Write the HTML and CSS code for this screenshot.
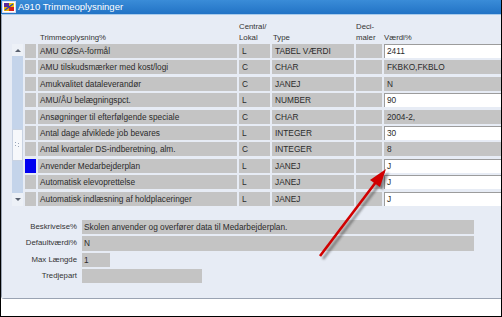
FILE: index.html
```html
<!DOCTYPE html>
<html>
<head>
<meta charset="utf-8">
<link rel="stylesheet" href="styles.css">
</head>
<body>
<div class="frame">
  <div class="win">
    <div class="titlebar">
      <svg class="ticon" width="14" height="12" viewBox="0 0 14 12">
        <rect x="0.5" y="0.5" width="13" height="11" fill="#fff" stroke="#d8d8e8"/>
        <rect x="2" y="2" width="5" height="4" fill="#5a2a9a"/>
        <rect x="7" y="2" width="5" height="4" fill="#f2c500"/>
        <rect x="2" y="6" width="5" height="4" fill="#e8b000"/>
        <rect x="7" y="6" width="5" height="4" fill="#d42020"/>
        <path d="M3 9 L11 3" stroke="#2040c0" stroke-width="1.2"/>
      </svg>
      <span class="ttext">A910 Trimmeoplysninger</span>
    </div>
    <div class="client">
      <div class="thead">
        <div></div>
        <div></div>
        <div class="h hname">Trimmeoplysning%</div>
        <div class="h">Central/<br>Lokal</div>
        <div class="h htype">Type</div>
        <div class="h">Deci-<br>maler</div>
        <div class="h">Værdi%</div>
      </div>
      <div class="tbody">
        <div class="scroll">
          <div class="sb-btn"><span class="up"></span></div>
          <div class="thumb">
            <svg width="5" height="6" viewBox="0 0 5 6"><rect x="0" y="0" width="1" height="1" fill="#9aa6b8"/><rect x="0" y="3" width="1" height="1" fill="#9aa6b8"/><rect x="3" y="1" width="1" height="1" fill="#9aa6b8"/><rect x="3" y="4" width="1" height="1" fill="#9aa6b8"/></svg>
          </div>
          <div class="sb-btn sb-down"><span class="down"></span></div>
        </div>

        <div class="c ind"></div><div class="c name">AMU CØSA-formål</div><div class="c cl">L</div><div class="c type">TABEL VÆRDI</div><div class="c dec"></div><div class="c val w">2411</div>
        <div class="c ind"></div><div class="c name">AMU tilskudsmærker med kost/logi</div><div class="c cl">C</div><div class="c type">CHAR</div><div class="c dec"></div><div class="c val">FKBKO,FKBLO</div>
        <div class="c ind"></div><div class="c name">Amukvalitet dataleverandør</div><div class="c cl">C</div><div class="c type">JANEJ</div><div class="c dec"></div><div class="c val">N</div>
        <div class="c ind"></div><div class="c name">AMU/ÅU belægningspct.</div><div class="c cl">L</div><div class="c type">NUMBER</div><div class="c dec"></div><div class="c val w">90</div>
        <div class="c ind"></div><div class="c name">Ansøgninger til efterfølgende speciale</div><div class="c cl">C</div><div class="c type">CHAR</div><div class="c dec"></div><div class="c val">2004-2,</div>
        <div class="c ind"></div><div class="c name">Antal dage afviklede job bevares</div><div class="c cl">L</div><div class="c type">INTEGER</div><div class="c dec"></div><div class="c val w">30</div>
        <div class="c ind"></div><div class="c name">Antal kvartaler DS-indberetning, alm.</div><div class="c cl">C</div><div class="c type">INTEGER</div><div class="c dec"></div><div class="c val">8</div>
        <div class="c ind cur"></div><div class="c name">Anvender Medarbejderplan</div><div class="c cl">L</div><div class="c type">JANEJ</div><div class="c dec"></div><div class="c val w">J</div>
        <div class="c ind"></div><div class="c name">Automatisk elevoprettelse</div><div class="c cl">L</div><div class="c type">JANEJ</div><div class="c dec"></div><div class="c val w">J</div>
        <div class="c ind"></div><div class="c name">Automatisk indlæsning af holdplaceringer</div><div class="c cl">L</div><div class="c type">JANEJ</div><div class="c dec"></div><div class="c val w">J</div>
      </div>

      <div class="details">
        <div class="lbl">Beskrivelse%</div><div class="fld f-wide">Skolen anvender og overfører data til Medarbejderplan.</div>
        <div class="lbl">Defaultværdi%</div><div class="fld f-wide">N</div>
        <div class="lbl">Max Længde</div><div class="fld f-small">1</div>
        <div class="lbl">Tredjepart</div><div class="fld f-mid"></div>
      </div>
    </div>
  </div>
  <svg class="arrow" width="502" height="317" viewBox="0 0 502 317">
    <defs>
      <filter id="sh" x="-30%" y="-30%" width="160%" height="160%">
        <feGaussianBlur stdDeviation="1.3"/>
      </filter>
    </defs>
    <g filter="url(#sh)" opacity="0.5" transform="translate(3,3)">
      <line x1="320" y1="256" x2="376" y2="182" stroke="#333" stroke-width="2.6"/>
      <polygon points="386,169 380,187 370,180" fill="#333"/>
    </g>
    <line x1="320" y1="256" x2="376" y2="182" stroke="#d10000" stroke-width="2.6"/>
    <polygon points="386,169 380,187 370,180" fill="#d10000"/>
  </svg>
</div>
</body>
</html>
```

FILE: styles.css
```css
* { box-sizing: border-box; margin: 0; padding: 0; }

html, body {
  width: 502px;
  height: 317px;
  overflow: hidden;
  background: #fff;
}

body {
  font-family: "Liberation Sans", Arial, sans-serif;
  color: #2b2b2b;
}

.frame {
  position: relative;
  width: 502px;
  height: 317px;
  border: 1px solid #000;
  border-top: 0;
  background: #fff;
  overflow: hidden;
}

.win {
  height: 299px;
  display: flex;
  flex-direction: column;
  border-bottom: 1px solid #9aa3b2;
  border-bottom-left-radius: 3px;
  overflow: hidden;
}

.titlebar {
  height: 15px;
  flex: none;
  background: linear-gradient(#3a8cd8, #2273c5);
  border-bottom: 1px solid #a9cbeb;
  display: flex;
  align-items: center;
  padding-left: 1px;
  gap: 2px;
}

.ticon { flex: none; }

.ttext {
  color: #fff;
  font-size: 9.5px;
  line-height: 14px;
}

.client {
  flex: 1;
  background: #e7ecf5;
  border-left: 1px solid #9aa3b2;
  padding-left: 8px;
}

.thead,
.tbody {
  display: grid;
  grid-template-columns: 13px 11px 199px 31px 82px 26px 1fr;
  column-gap: 2px;
}

.thead {
  height: 29px;
  align-items: end;
  font-size: 7.8px;
  line-height: 11px;
  padding-bottom: 1px;
  color: #333;
}

.h { white-space: nowrap; }
.hname { padding-left: 2px; }
.htype { padding-left: 1px; }

.tbody {
  grid-template-rows: repeat(10, 14px);
  row-gap: 2.4px;
  font-size: 8.3px;
}

.scroll {
  grid-column: 1;
  grid-row: 1 / span 10;
  justify-self: end;
  width: 11px;
  background: #c4d4ea;
  display: flex;
  flex-direction: column;
}

.sb-btn {
  height: 12px;
  flex: none;
  background: #edf1f7;
  display: flex;
  align-items: center;
  justify-content: center;
}

.sb-down {
  margin-top: auto;
  height: 13px;
}

.up {
  width: 0;
  height: 0;
  border-left: 3px solid transparent;
  border-right: 3px solid transparent;
  border-bottom: 3px solid #5a6270;
}

.down {
  width: 0;
  height: 0;
  border-left: 3px solid transparent;
  border-right: 3px solid transparent;
  border-top: 3px solid #5a6270;
}

.thumb {
  margin-top: 73px;
  height: 32px;
  background: #f6f8fb;
  border: 1px solid #c9d3e2;
  display: flex;
  align-items: center;
  justify-content: center;
}

.c {
  background: #c4c4c4;
  padding-left: 3px;
  line-height: 14px;
  white-space: nowrap;
  overflow: hidden;
}

.ind { padding-left: 0; }
.cur { background: #0000f0; }
.name { padding-left: 2px; }

.w {
  background: #fff;
  border-top: 1px solid #9c9c9c;
  border-left: 1px solid #9c9c9c;
  padding-left: 2px;
  line-height: 13px;
}

.details {
  display: grid;
  grid-template-columns: 67px 392px;
  grid-auto-rows: 14.5px;
  column-gap: 5px;
  row-gap: 1.8px;
  margin-top: 14.4px;
}

.lbl {
  text-align: right;
  font-size: 7.8px;
  line-height: 14.5px;
  white-space: nowrap;
  color: #333;
}

.fld {
  background: #c4c4c4;
  font-size: 8.3px;
  line-height: 14.5px;
  padding-left: 2px;
  white-space: nowrap;
  overflow: hidden;
}

.f-wide { width: 392px; }
.f-small { width: 28px; }
.f-mid { width: 120px; }

.arrow {
  position: absolute;
  left: -1px;
  top: 0;
  pointer-events: none;
}
```
